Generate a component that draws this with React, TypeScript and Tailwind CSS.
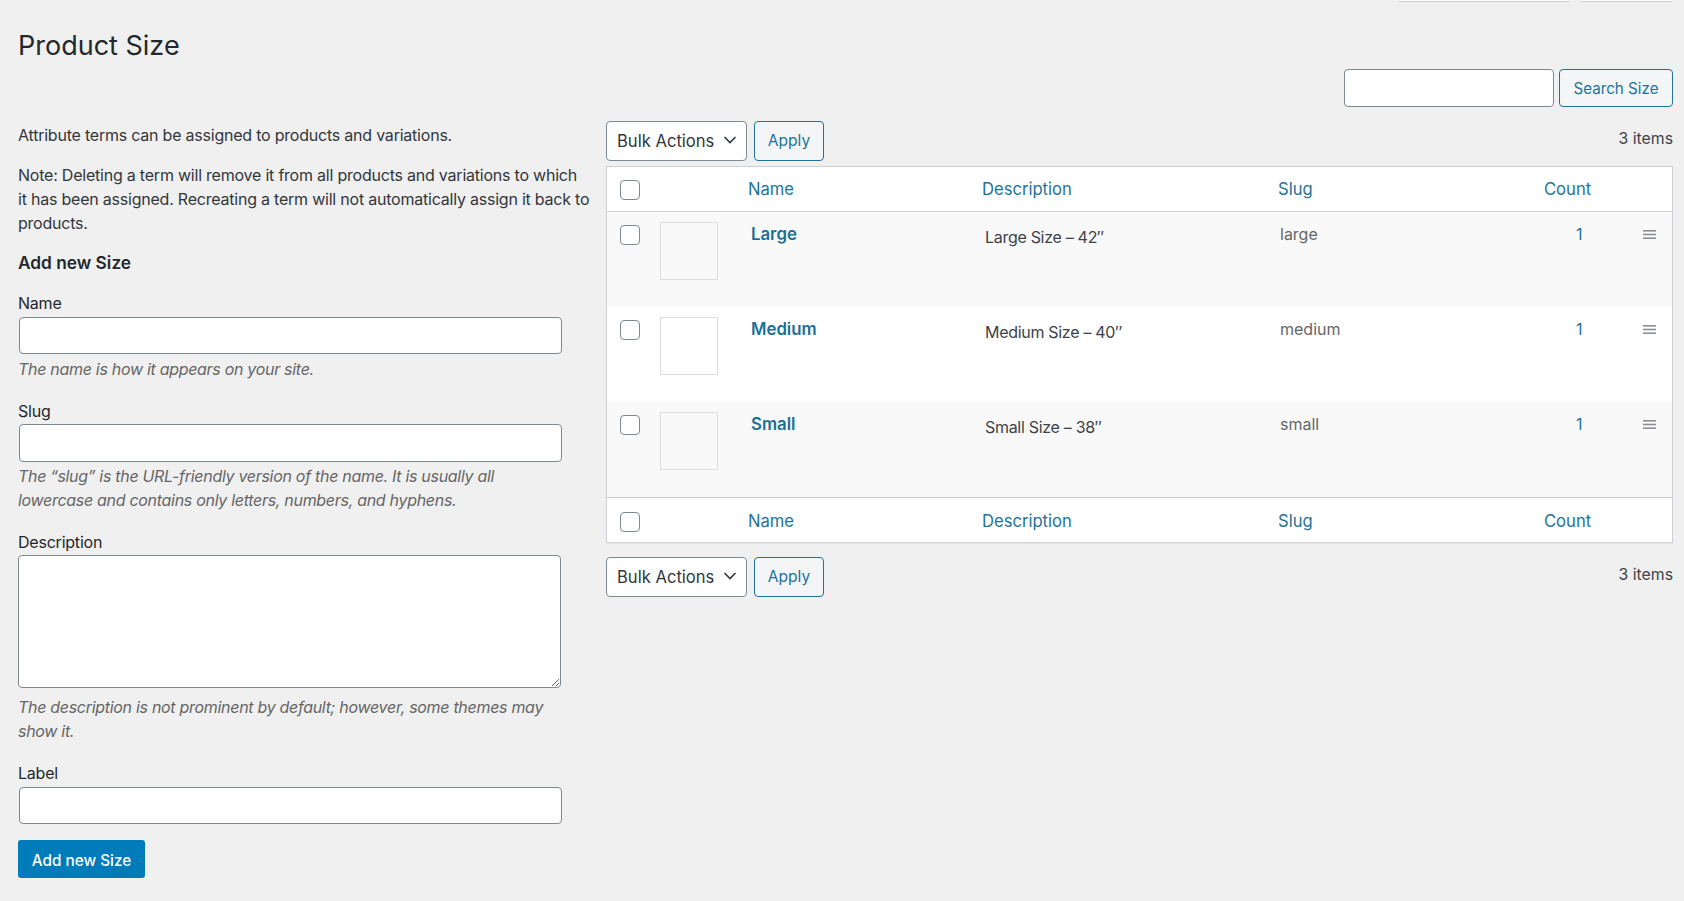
import React from 'react';

const terms = [
  { name: 'Large', description: 'Large Size – 42″', slug: 'large', rowClass: 'h-[96px] bg-[#f9f9f9]' },
  { name: 'Medium', description: 'Medium Size – 40″', slug: 'medium', rowClass: 'h-[95px] bg-white' },
  { name: 'Small', description: 'Small Size – 38″', slug: 'small', rowClass: 'h-[95px] bg-[#f9f9f9]' },
];

const Checkbox = () => (
  <span className="block w-5 h-5 bg-white border border-[#7e8993] rounded-[4px]" />
);

const Chevron = () => (
  <svg className="absolute right-[10px] top-[14px] pointer-events-none" width="14" height="10" viewBox="0 0 14 10" fill="none">
    <path d="M1.5 2 L7 7.5 L12.5 2" stroke="#32373c" strokeWidth="1.6" />
  </svg>
);

const Handle = () => (
  <svg className="block" width="13" height="9" viewBox="0 0 13 9" fill="#8c8f94">
    <rect x="0" y="0" width="13" height="1.6" />
    <rect x="0" y="3.7" width="13" height="1.6" />
    <rect x="0" y="7.4" width="13" height="1.6" />
  </svg>
);

const HeadRow = ({ className, boxPad, textPad }: { className: string; boxPad: string; textPad: string }) => (
  <tr className={`bg-white text-[16.6px] text-[#1f7399] ${className}`}>
    <td className={`pl-[13px] align-middle ${boxPad}`}><Checkbox /></td>
    <td />
    <td className={`pl-[10px] ${textPad}`}>Name</td>
    <td className={`pl-[10px] ${textPad}`}>Description</td>
    <td className={`pl-[10px] ${textPad}`}>Slug</td>
    <td className={`pl-[10px] ${textPad}`}>Count</td>
    <td />
  </tr>
);

const Toolbar = () => (
  <div className="flex items-center h-10 gap-[7px]">
    <div className="relative">
      <select className="appearance-none block w-[141px] h-10 pl-[10px] bg-white border border-[#7e8993] rounded-[4px] text-[#32373c] text-[16.6px]">
        <option>Bulk Actions</option>
      </select>
      <Chevron />
    </div>
    <button className="w-[70px] h-10 bg-[#f3f5f6] border border-[#1f7399] rounded-[4px] text-[#1f7399] text-[15.6px]">Apply</button>
    <span className="ml-auto -mt-1 text-[#3c434a] text-[15.8px]">3 items</span>
  </div>
);

const Hint = ({ className, children }: { className: string; children: React.ReactNode }) => (
  <p className={`italic text-[#666666] tracking-[-0.3px] ${className}`}>{children}</p>
);

export default function App() {
  return (
    <div className="min-h-screen bg-[#f0f0f0] pl-[18px] pr-[11px] font-['Inter','Liberation_Sans',sans-serif] text-[16px] leading-6 text-[#32373c] overflow-hidden">
      {/* Bottom edges of the Screen Options and Help tabs */}
      <div className="flex justify-end gap-[10px] h-[2px]">
        <div className="w-[172px] h-[2px] bg-white border-b border-[#ccd0d4] rounded-b" />
        <div className="w-[93px] h-[2px] bg-white border-b border-[#ccd0d4] rounded-b" />
      </div>

      <h1 className="mt-[26px] h-9 leading-9 text-[27px] text-[#23282d]">Product Size</h1>

      <div className="mt-[5px] flex justify-end gap-[5px]">
        <input className="w-[210px] h-[38px] bg-white border border-[#7e8993] rounded-[4px]" />
        <button className="w-[114px] h-[38px] pt-[2px] bg-[#f3f5f6] border border-[#1f7399] rounded-[4px] text-[#1f7399] text-[15.2px]">Search Size</button>
      </div>

      <div className="mt-[14px] flex gap-[13px]">
        <div className="w-[575px] shrink-0 pt-[2px] tracking-[-0.22px]">
          <p>Attribute terms can be assigned to products and variations.</p>
          <p className="mt-4">Note: Deleting a term will remove it from all products and variations to which<br />it has been assigned. Recreating a term will not automatically assign it back to products.</p>
          <h2 className="mt-4 font-semibold text-[17.3px] tracking-normal text-[#23282d]">Add new Size</h2>

          <label className="block mt-4 text-[#23282d]">Name</label>
          <input className="block mt-[2px] ml-px w-[543px] h-[37px] bg-white border border-[#7e8993] rounded-[4px]" />
          <Hint className="mt-[3px]">The name is how it appears on your site.</Hint>

          <label className="block mt-[18px] text-[#23282d]">Slug</label>
          <input className="block mt-px ml-px w-[543px] h-[38px] bg-white border border-[#7e8993] rounded-[4px]" />
          <Hint className="mt-[2px] w-[520px]">The “slug” is the URL-friendly version of the name. It is usually all lowercase and contains only letters, numbers, and hyphens.</Hint>

          <label className="block mt-[18px] text-[#23282d]">Description</label>
          <textarea className="block mt-px w-[543px] h-[133px] bg-white border border-[#7e8993] rounded-[4px]" />
          <Hint className="mt-[7px] w-[540px]">The description is not prominent by default; however, some themes may show it.</Hint>

          <label className="block mt-[18px] text-[#23282d]">Label</label>
          <input className="block mt-[2px] ml-px w-[543px] h-[37px] bg-white border border-[#7e8993] rounded-[4px]" />

          <button className="block mt-4 w-[127px] h-[38px] pt-1 bg-[#007cba] rounded-[3px] text-white text-[15.3px] tracking-normal font-medium">Add new Size</button>
        </div>

        <div className="flex-1 min-w-0">
          <Toolbar />
          <div className="mt-[5px] bg-white border border-[#ccd0d4] shadow-[0_1px_1px_rgba(0,0,0,0.04)]">
            <table className="w-full table-fixed border-collapse">
              <colgroup>
                <col className="w-[47px]" />
                <col className="w-[84px]" />
                <col className="w-[234px]" />
                <col className="w-[296px]" />
                <col className="w-[266px]" />
                <col className="w-[67px]" />
                <col />
              </colgroup>
              <tbody>
                <HeadRow className="h-[44px] border-b border-[#ccd0d4]" boxPad="pt-[2px]" textPad="" />
                {terms.map((t) => (
                  <tr key={t.name} className={`align-top ${t.rowClass}`}>
                    <td className="pl-[13px] pt-[13px]"><Checkbox /></td>
                    <td className="pl-[6px] pt-[10px]">
                      <div className="w-[58px] h-[58px] border border-[#dddddd]" />
                    </td>
                    <td className="pl-[13px] pt-[10px] font-semibold text-[16.8px] text-[#1a6f96]">{t.name}</td>
                    <td className="pl-[13px] pt-[13px] tracking-[-0.3px] text-[#3c434a]">{t.description}</td>
                    <td className="pl-3 pt-[10px] text-[#666666]">{t.slug}</td>
                    <td className="pl-[42px] pt-[10px] text-[#1f7399]">1</td>
                    <td className="pl-[42px] pt-[18px]"><Handle /></td>
                  </tr>
                ))}
                <HeadRow className="h-[45px] border-t border-[#ccd0d4]" boxPad="pt-[5px]" textPad="pt-[2px]" />
              </tbody>
            </table>
          </div>
          <div className="mt-[14px]">
            <Toolbar />
          </div>
        </div>
      </div>
    </div>
  );
}
